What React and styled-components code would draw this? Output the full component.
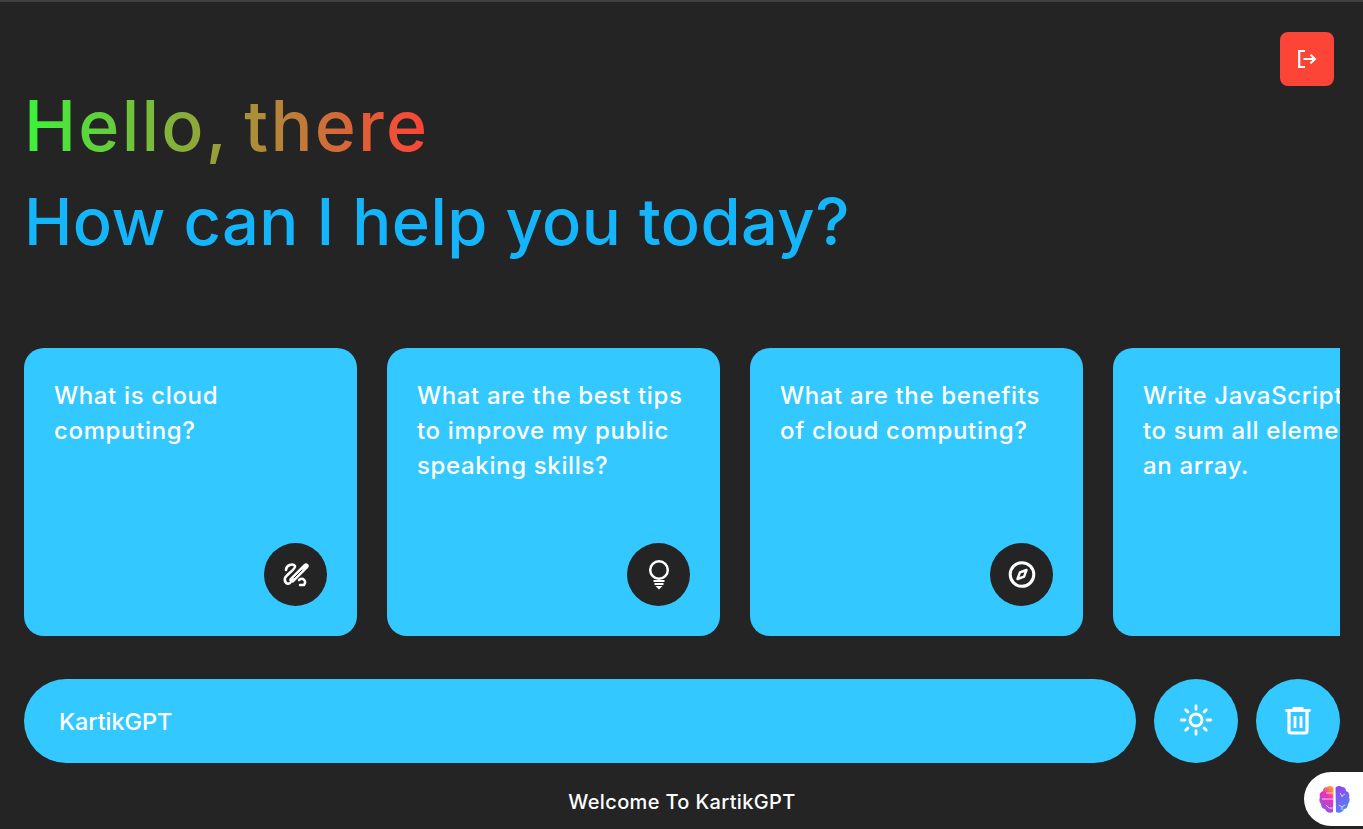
import React from 'react'
import styled, { createGlobalStyle } from 'styled-components'

const GlobalStyle = createGlobalStyle`
  html, body {
    margin: 0;
    height: 100%;
    overflow: hidden;
    background: #242424;
  }
  * { box-sizing: border-box; }
`

const Page = styled.div`
  position: relative;
  height: 829px;
  padding: 0 23px 0 24px;
  border-top: 2px solid #3d4043;
  background: #242424;
  font-family: Inter, "Liberation Sans", sans-serif;
  color: #fff;
  display: flex;
  flex-direction: column;
`

const Header = styled.header`
  display: flex;
  justify-content: space-between;
  align-items: flex-start;
  height: 346px;
  padding-right: 6px;
`

const Greeting = styled.div`
  padding-top: 76px;
`

const Hello = styled.h1`
  margin: 0;
  width: fit-content;
  font-size: 70px;
  line-height: 96px;
  font-weight: 500;
  letter-spacing: 2.2px;
  word-spacing: -5px;
  background: linear-gradient(90deg, #3cf23c, #ff4237);
  -webkit-background-clip: text;
  background-clip: text;
  color: transparent;
`

const Sub = styled.h2`
  margin: 0;
  font-size: 65px;
  line-height: 96px;
  font-weight: 500;
  letter-spacing: 0.4px;
  color: #14b5fb;
`

const Logout = styled.button`
  margin-top: 30px;
  width: 54px;
  height: 54px;
  border: 0;
  border-radius: 8px;
  background: #fd4537;
  display: flex;
  align-items: center;
  justify-content: center;
`

const Cards = styled.div`
  display: flex;
  gap: 30px;
  overflow: hidden;
  height: 288px;
`

const Card = styled.div`
  position: relative;
  flex: 0 0 333px;
  height: 288px;
  padding: 30px;
  border-radius: 20px;
  background: #33c8ff;
  font-size: 24px;
  line-height: 35px;
  font-weight: 450;
  letter-spacing: 0.65px;
  white-space: pre;
`

const CardIcon = styled.span`
  position: absolute;
  right: 30px;
  bottom: 30px;
  width: 63px;
  height: 63px;
  border-radius: 50%;
  background: #242424;
  display: flex;
  align-items: center;
  justify-content: center;
`

const Composer = styled.div`
  display: flex;
  gap: 18px;
  margin-top: 43px;
`

const Prompt = styled.div`
  flex: 0 0 1112px;
  height: 84px;
  padding: 0 35px;
  border-radius: 42px;
  background: #33c8ff;
  font-size: 23.5px;
  font-weight: 450;
  letter-spacing: -0.1px;
  display: flex;
  align-items: center;
`

const RoundButton = styled.button`
  width: 84px;
  height: 84px;
  border: 0;
  border-radius: 50%;
  background: #33c8ff;
  display: flex;
  align-items: center;
  justify-content: center;
`

const Footer = styled.p`
  margin: 26px 0 0;
  text-align: center;
  font-size: 20px;
  line-height: 26px;
  font-weight: 450;
  letter-spacing: 0.35px;
`

const BrainTab = styled.div`
  position: absolute;
  right: 0;
  top: 770px;
  width: 59px;
  height: 54px;
  border-radius: 27px 0 0 27px;
  background: #fff;
  display: flex;
  align-items: center;
  padding-left: 15px;
`

const ExitIcon = () => (
  <svg width="20" height="20" viewBox="0 0 20 20" fill="none" stroke="#fff">
    <path d="M8 2H2.200v16H8" strokeWidth="2.200" />
    <path d="M6.500 10H18M13.500 5.800 18 10l-4.500 4.200" strokeWidth="2.100" />
  </svg>
)

const DrawIcon = () => (
  <svg width="28" height="26" viewBox="0 0 28 26" fill="none" stroke="#fff" strokeLinecap="round">
    <path d="M4 8C4 3 11 1 13 4 14 7 5 12 3 16 2 20 5 23 8 21" strokeWidth="2.600" />
    <path d="M17 18C21 15 25 19 22 23H18" strokeWidth="2.400" />
    <path d="M24 4 10 18" strokeWidth="5.400" />
    <path d="M20 8 12 16" stroke="#242424" strokeWidth="1" />
  </svg>
)

const Bulb = () => (
  <svg width="28" height="32" viewBox="0 0 28 32" fill="none">
    <circle cx="14" cy="11" r="8.800" stroke="#fff" strokeWidth="2.500" />
    <path d="M8.500 22h11M9.500 25h9" stroke="#fff" strokeWidth="2.200" />
    <path d="M10.500 27h7L14 30.500z" fill="#fff" />
  </svg>
)

const Compass = () => (
  <svg width="28" height="28" viewBox="0 0 28 28" fill="none">
    <circle cx="14" cy="13.500" r="11.800" stroke="#fff" strokeWidth="3" />
    <path d="M18.500 9l-2.400 6.600L9.500 18l2.400-6.600z" stroke="#fff" strokeWidth="2.400" strokeLinejoin="round" />
  </svg>
)

const SunIcon = () => (
  <svg width="34" height="34" viewBox="0 0 34 34" fill="none" stroke="#fff" strokeWidth="2.800" strokeLinecap="round">
    <circle cx="17" cy="16" r="6" />
    <path d="M17 1.800v3.600M17 26.600v3.600M2.400 16h3.600M28 16h3.600M6.700 5.700l2.200 2.200M25.100 24.100l2.200 2.200M6.700 26.300l2.200-2.200M25.100 7.900l2.200-2.200" />
  </svg>
)

const Trash = () => (
  <svg width="26" height="30" viewBox="0 0 26 30" fill="none" stroke="#fff">
    <path d="M1.500 4.500h23M9 4.500V2.500h8v2" strokeWidth="2.800" strokeLinecap="round" />
    <path d="M4 5v20a2 2 0 0 0 2 2h14a2 2 0 0 0 2-2V5" strokeWidth="3.200" />
    <path d="M10 10v12M16 10v12" strokeWidth="2.800" />
  </svg>
)

const Brain = () => (
  <svg width="31" height="29" viewBox="0 0 31 29">
    <defs>
      <linearGradient id="brainL" x1="0.7" y1="0" x2="0.3" y2="1">
        <stop offset="0" stopColor="#ffa126" />
        <stop offset="0.35" stopColor="#f02fb4" />
        <stop offset="1" stopColor="#7f5cf5" />
      </linearGradient>
      <linearGradient id="brainR" x1="0.3" y1="0" x2="0.7" y2="1">
        <stop offset="0" stopColor="#9145ec" />
        <stop offset="1" stopColor="#4a8df8" />
      </linearGradient>
    </defs>
    <path d="M14.500 3C14 1 10 0 8 2 5 2 4 4 4 6 1 7 0 10 1 12c-1 2-1 5 1 7 0 3 2 5 4 5 1 3 5 5 8 3z" fill="url(#brainL)" />
    <path d="M16.500 3C17 1 21 0 23 2c3 0 4 2 4 4 3 1 4 4 3 6 1 2 1 5-1 7 0 3-2 5-4 5-1 3-5 5-8 3z" fill="url(#brainR)" />
    <path d="M3 14h11M7 8h7M7 20l3 3h4M21 8l2 3 3-2M23 11v1M20 20l3 2 3-2M23 22v3" stroke="#fff" strokeOpacity="0.7" strokeWidth="1" fill="none" />
  </svg>
)

const prompts = [
  { text: 'What is cloud\ncomputing?', icon: <DrawIcon /> },
  { text: 'What are the best tips\nto improve my public\nspeaking skills?', icon: <Bulb /> },
  { text: 'What are the benefits\nof cloud computing?', icon: <Compass /> },
  { text: 'Write JavaScript code\nto sum all elements in\nan array.', icon: null },
]

export default function App() {
  return (
    <Page>
      <GlobalStyle />
      <Header>
        <Greeting>
          <Hello>Hello, there</Hello>
          <Sub>How can I help you today?</Sub>
        </Greeting>
        <Logout aria-label="Log out"><ExitIcon /></Logout>
      </Header>
      <Cards>
        {prompts.map(p => (
          <Card key={p.text}>
            {p.text}
            {p.icon && <CardIcon>{p.icon}</CardIcon>}
          </Card>
        ))}
      </Cards>
      <Composer>
        <Prompt>KartikGPT</Prompt>
        <RoundButton aria-label="Theme"><SunIcon /></RoundButton>
        <RoundButton aria-label="Clear"><Trash /></RoundButton>
      </Composer>
      <Footer>Welcome To KartikGPT</Footer>
      <BrainTab><Brain /></BrainTab>
    </Page>
  )
}
